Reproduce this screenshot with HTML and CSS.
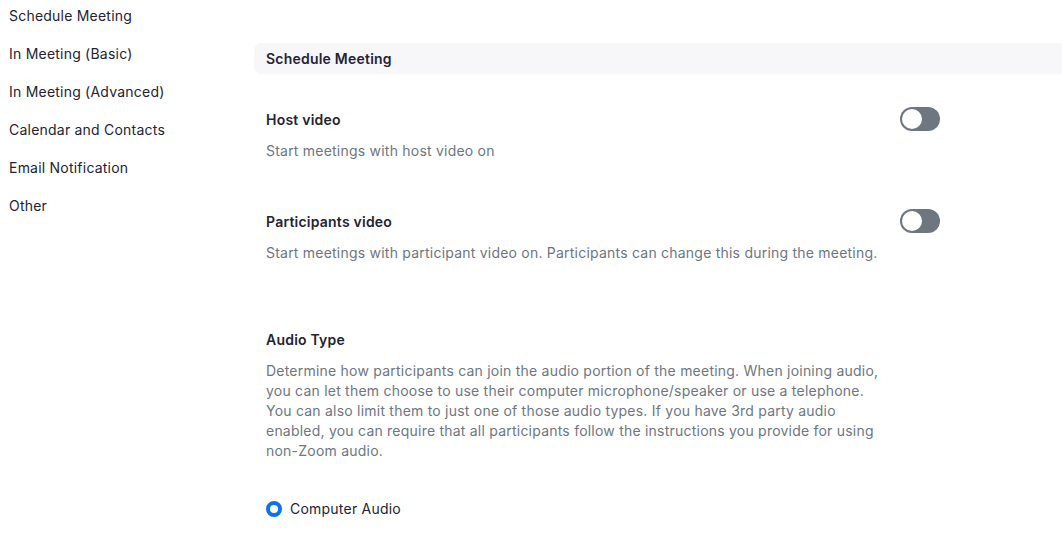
FILE: index.html
```html
<!DOCTYPE html>
<html>
<head>
<meta charset="utf-8">
<link rel="stylesheet" href="styles.css">
</head>
<body>
<div class="page">
  <nav class="sidebar">
    <div class="nav-item">Schedule Meeting</div>
    <div class="nav-item">In Meeting (Basic)</div>
    <div class="nav-item">In Meeting (Advanced)</div>
    <div class="nav-item">Calendar and Contacts</div>
    <div class="nav-item">Email Notification</div>
    <div class="nav-item">Other</div>
  </nav>
  <main class="main">
    <div class="section-header">Schedule Meeting</div>
    <div class="setting setting-first">
      <div class="setting-text">
        <div class="setting-title">Host video</div>
        <div class="setting-desc">Start meetings with host video on</div>
      </div>
      <div class="toggle"><span class="knob"></span></div>
    </div>
    <div class="setting setting-second">
      <div class="setting-text">
        <div class="setting-title">Participants video</div>
        <div class="setting-desc">Start meetings with participant video on. Participants can change this during the meeting.</div>
      </div>
      <div class="toggle"><span class="knob"></span></div>
    </div>
    <div class="setting setting-third">
      <div class="setting-text">
        <div class="setting-title">Audio Type</div>
        <div class="setting-desc wide">Determine how participants can join the audio portion of the meeting. When joining audio, you can let them choose to use their computer microphone/speaker or use a telephone. You can also limit them to just one of those audio types. If you have 3rd party audio enabled, you can require that all participants follow the instructions you provide for using non-Zoom audio.</div>
        <label class="radio-row"><span class="radio"></span><span class="radio-label">Computer Audio</span></label>
      </div>
    </div>
  </main>
</div>
</body>
</html>
```
FILE: styles.css
```css
* { box-sizing: border-box; }
html, body { margin: 0; padding: 0; background: #fff; }
body {
  font-family: Inter, "Noto Sans", "Liberation Sans", sans-serif;
  font-size: 14px;
  letter-spacing: 0.22px;
  color: #232333;
  overflow: hidden;
}
.page {
  display: flex;
  width: 1062px;
  height: 554px;
}
.sidebar {
  width: 254px;
  flex: none;
  padding: 6px 0 0 9px;
  display: flex;
  flex-direction: column;
}
.nav-item {
  height: 38px;
  line-height: 20px;
  color: #232333;
}
.main {
  flex: 1;
  padding-top: 43px;
  display: flex;
  flex-direction: column;
}
.section-header {
  height: 31px;
  line-height: 31px;
  background: #f7f7fa;
  border-radius: 8px 0 0 8px;
  padding-left: 12px;
  font-weight: 600;
  color: #232333;
}
.setting {
  display: flex;
  align-items: flex-start;
  padding-left: 12px;
  width: 686px;
}
.setting-first { margin-top: 36px; }
.setting-second { margin-top: 51px; }
.setting-third { margin-top: 67px; }
.setting-text { flex: 1; }
.setting-title {
  font-weight: 600;
  line-height: 20px;
  color: #232333;
}
.setting-desc {
  margin-top: 11px;
  line-height: 20px;
  color: #6e7680;
}
.setting-desc.wide { max-width: 620px; }
.toggle {
  flex: none;
  width: 40px;
  height: 24px;
  margin-top: -3px;
  border-radius: 12px;
  background: #6e7680;
  padding: 2px;
  display: flex;
  align-items: center;
}
.knob {
  width: 20px;
  height: 20px;
  border-radius: 50%;
  background: #fff;
}
.radio-row {
  margin-top: 38px;
  display: flex;
  align-items: center;
  gap: 8px;
  line-height: 20px;
  color: #232333;
}
.radio {
  width: 16px;
  height: 16px;
  border-radius: 50%;
  border: 4px solid #0e72ed;
  background: #fff;
}
```
